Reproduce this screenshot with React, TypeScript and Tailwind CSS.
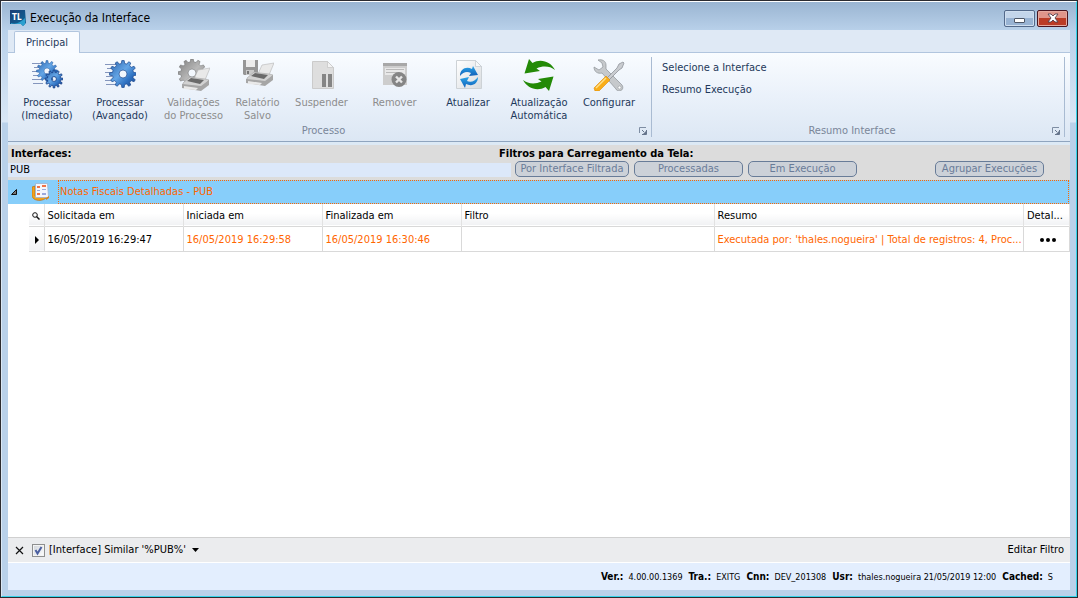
import { useState, type ReactNode } from 'react'

interface Execution {
  requested: string
  started: string
  finished: string
  filter: string
  summary: string
}

const executions: Execution[] = [
  {
    requested: '16/05/2019 16:29:47',
    started: '16/05/2019 16:29:58',
    finished: '16/05/2019 16:30:46',
    filter: '',
    summary: "Executada por: 'thales.nogueira' | Total de registros: 4, Proc...",
  },
]

const statusItems = [
  { label: 'Ver.:', value: '4.00.00.1369' },
  { label: 'Tra.:', value: 'EXITG' },
  { label: 'Cnn:', value: 'DEV_201308' },
  { label: 'Usr:', value: 'thales.nogueira 21/05/2019 12:00' },
  { label: 'Cached:', value: 'S' },
]

// Outline of a cog wheel with a hole in the middle
const gearPath = (cx: number, cy: number, outer: number, inner: number, hole: number, teeth: number) => {
  const step = (Math.PI * 2) / teeth
  const points: string[] = []
  for (let i = 0; i < teeth; i++) {
    const a = i * step
    const parts: [number, number][] = [
      [inner, a - step * 0.3],
      [outer, a - step * 0.17],
      [outer, a + step * 0.17],
      [inner, a + step * 0.3],
    ]
    parts.forEach(([r, t]) => points.push(`${(cx + r * Math.cos(t)).toFixed(2)} ${(cy + r * Math.sin(t)).toFixed(2)}`))
  }
  return `M${points.join('L')}ZM${cx - hole} ${cy}a${hole} ${hole} 0 1 0 ${hole * 2} 0a${hole} ${hole} 0 1 0 ${-hole * 2} 0Z`
}

function Gradients() {
  return (
    <svg className="absolute h-0 w-0" aria-hidden="true">
      <defs>
        <linearGradient id="blue" x1="0" y1="0" x2="1" y2="1">
          <stop offset="0" stopColor="#2a62ab" />
          <stop offset="0.45" stopColor="#64a6e6" />
          <stop offset="0.7" stopColor="#2f72c2" />
          <stop offset="1" stopColor="#163f86" />
        </linearGradient>
        <linearGradient id="gray" x1="0" y1="0" x2="1" y2="1">
          <stop offset="0" stopColor="#7d7d7d" />
          <stop offset="0.5" stopColor="#b8b8b8" />
          <stop offset="1" stopColor="#7c7c7c" />
        </linearGradient>
        <linearGradient id="paper" x1="0" y1="0" x2="1" y2="1">
          <stop offset="0" stopColor="#ffffff" />
          <stop offset="1" stopColor="#d9dcdf" />
        </linearGradient>
        <linearGradient id="arrow" x1="0" y1="0" x2="0" y2="1">
          <stop offset="0" stopColor="#2ba4e8" />
          <stop offset="1" stopColor="#1260b8" />
        </linearGradient>
        <linearGradient id="logo" x1="0" y1="0" x2="1" y2="1">
          <stop offset="0" stopColor="#1d3d74" />
          <stop offset="1" stopColor="#0d6b9d" />
        </linearGradient>
      </defs>
    </svg>
  )
}

function Icon({ children }: { children: ReactNode }) {
  return (
    <svg viewBox="0 0 32 32" className="h-8 w-8" aria-hidden="true">
      {children}
    </svg>
  )
}

function Printer() {
  return (
    <g>
      <path d="M16 20l4-9 12-2-5 12z" fill="#e9e9e9" stroke="#b5b5b5" strokeWidth="0.6" />
      <path d="M5 24l7-6 6 1 9 1 4 1-7 7-19-2z" fill="#d2d2d2" stroke="#a2a2a2" strokeWidth="0.6" />
      <path d="M9 22l4-3 13 2-4 4z" fill="#6a6a6a" />
      <path d="M4 25l19 2 8-6v5l-8 6-19-3z" fill="#a6a6a6" />
      <path d="M6 27l14 2-2 2-12-1z" fill="#e9e9e9" />
    </g>
  )
}

function ProcessNowIcon() {
  return (
    <Icon>
      <path d="M1 4.500h10M3 8.500h6M1 12.500h7M2 16.500h6M1 20.500h9M2 24.500h10" stroke="#8496bd" strokeWidth="1" />
      <path d={gearPath(16, 12, 10.5, 8, 3, 12)} fill="url(#blue)" stroke="#24599f" strokeWidth="0.5" fillRule="evenodd" />
      <path d={gearPath(23, 20, 9, 6.6, 2.4, 12)} fill="url(#blue)" stroke="#163f86" strokeWidth="0.8" fillRule="evenodd" />
    </Icon>
  )
}

function ProcessAdvancedIcon() {
  return (
    <Icon>
      <path d="M1 5.500h12M3 9.500h8M1 13.500h8M2 17.500h6M1 21.500h9M2 25.500h10" stroke="#8496bd" strokeWidth="1" />
      <path
        d={gearPath(19, 15, 13.5, 10.6, 4, 12)}
        fill="url(#blue)"
        stroke="#1c4b90"
        strokeWidth="0.7"
        fillRule="evenodd"
      />
    </Icon>
  )
}

function ValidationsIcon() {
  return (
    <Icon>
      <path d={gearPath(14, 14, 14, 11.2, 4, 12)} fill="url(#gray)" stroke="#747474" strokeWidth="0.6" fillRule="evenodd" />
      <Printer />
    </Icon>
  )
}

function SavedReportIcon() {
  return (
    <Icon>
      <path d="M1 1h15v15H2l-1-1z" fill="#969696" />
      <path d="M4 1h9v7H4z" fill="#ececec" />
      <path d="M4 11h8v5H4z" fill="#c9c9c9" />
      <path d="M5 12h2v3H5z" fill="#777" />
      <g transform="translate(0 -5)">
        <Printer />
      </g>
    </Icon>
  )
}

function SuspendIcon() {
  return (
    <Icon>
      <path d="M6.500 2.500h15l6 6v21h-21z" fill="#dedede" stroke="#cbcbcb" />
      <path d="M21.500 2.500v6h6z" fill="#f3f3f3" stroke="#c4c4c4" strokeWidth="0.7" />
      <path d="M16 15h4v13h-4zM22 15h4v13h-4z" fill="#858585" />
    </Icon>
  )
}

function RemoveIcon() {
  return (
    <Icon>
      <path d="M4 4h24v22H4z" fill="#cdcdcd" />
      <path d="M4 4h24v3H4z" fill="#a8a8a8" />
      <path d="M6 9h20v7H6z" fill="#e8e8e8" />
      <path d="M7 10.500h18M7 13.500h13" stroke="#b9b9b9" />
      <circle cx="20" cy="20.500" r="7.500" fill="#858585" />
      <path d="M17 17.500l6 6M23 17.500l-6 6" stroke="#e6e6e6" strokeWidth="2.400" />
    </Icon>
  )
}

function RefreshIcon() {
  return (
    <Icon>
      <path d="M4.500 1.500h19l6 6v22h-25z" fill="url(#paper)" stroke="#cdd2d6" />
      <path d="M23.500 1.500v6h6z" fill="#f7f9fa" stroke="#c3c9ce" strokeWidth="0.7" />
      <path d="M8 17C8 10 14 7 20 10l1-3 5 9-9 1 2-3c-4-2-8-1-11 3z" fill="url(#arrow)" />
      <path d="M26 18c0 7-6 10-12 7l-1 4-5-9 9-2-2 4c4 2 8 0 11-4z" fill="url(#arrow)" />
    </Icon>
  )
}

function AutoRefreshIcon() {
  return (
    <Icon>
      <path d="M6 0L1.500 14.500L17 12L13.500 9.500C20 6.500 27 7 32 11C28 3 18-1 9.500 4Z" fill="#238a07" />
      <path d="M26 32L30.500 17.500L15 20L18.500 22.500C12 25.500 5 25 0 21C4 29 14 33 22.500 28Z" fill="#238a07" />
    </Icon>
  )
}

function ConfigureIcon() {
  return (
    <Icon>
      <path
        d="M5 1c4-1 8 1 8 5v4l16 16c2 3 0 6-3 6-1 0-2 0-3-2L9 14c-4 1-8-1-8-6l5 3 4-3-1-4z"
        fill="#c6c9cc"
        stroke="#8d9297"
        strokeWidth="0.7"
      />
      <circle cx="26.500" cy="28.500" r="1.500" fill="#fff" stroke="#8d9297" strokeWidth="0.5" />
      <path d="M30 3l-4 2-2 4-10 10 2 2 10-10 3-2 2-5z" fill="#c9ccd0" stroke="#858a90" strokeWidth="0.7" />
      <path d="M13 17l4 4L6 32H2l-1-3z" fill="#f9ae19" stroke="#db8a08" strokeWidth="0.6" />
      <path d="M13 19L3 29" stroke="#ffe08a" strokeWidth="1.500" />
    </Icon>
  )
}

interface RibbonButtonProps {
  lines: string[]
  icon: ReactNode
  width: string
  disabled?: boolean
}

function RibbonButton({ lines, icon, width, disabled }: RibbonButtonProps) {
  return (
    <button
      type="button"
      disabled={disabled}
      className={`flex shrink-0 flex-col items-center whitespace-nowrap text-[#1e395b] disabled:text-[#8d8d8d] ${width}`}
    >
      {icon}
      <span className="mt-[5px] block leading-[13px]">
        {lines.map((line) => (
          <span key={line} className="block">
            {line}
          </span>
        ))}
      </span>
    </button>
  )
}

function GroupFooter({ title }: { title: string }) {
  return (
    <div className="mt-auto flex h-3 items-center text-[#7a8699]">
      <span className="flex-1 text-center">{title}</span>
      <button type="button" aria-label={`Opções de ${title}`} className="mr-1 h-2 w-2">
        <svg viewBox="0 0 8 8" className="h-2 w-2" aria-hidden="true">
          <path d="M0.500 6V0.500H7" fill="none" stroke="#7e8da3" />
          <path d="M3 3l2 2M7.500 3v4.500H3" fill="none" stroke="#66758c" />
          <path d="M4 7l3-3v3z" fill="#66758c" />
        </svg>
      </button>
    </div>
  )
}

function FilterButton({ children, className = '' }: { children: ReactNode; className?: string }) {
  return (
    <button
      type="button"
      className={`h-4 shrink-0 whitespace-nowrap rounded-[5px] border border-[#687c98] bg-[#ccd1d8] text-[11px] leading-3 text-[#6a7c98] ${className}`}
    >
      {children}
    </button>
  )
}

export default function App() {
  const [search, setSearch] = useState('PUB')
  const [filterOn, setFilterOn] = useState(true)

  return (
    <div className="flex min-h-screen flex-col border border-[#2b2b30] bg-[#b9d1ea] bg-[linear-gradient(to_bottom,#99b4d1_0,#b9d1ea_30px,#d9e7f6_121px,#b9d1ea_122px)] font-['DejaVu_Sans_Condensed','DejaVu_Sans',sans-serif] text-[11px] text-black">
      <Gradients />
      <div className="flex flex-1 flex-col border-t border-r border-b border-l border-t-white border-r-[#35d3ea] border-b-[#35d3ea] border-l-[#dbe8f5] px-[6px] pb-[6px]">
        <header className="flex h-7 items-center pt-1">
          <svg viewBox="0 0 16 16" className="ml-0.5 h-4 w-4" aria-hidden="true">
            <path d="M0 0h15l1 13-3 3-2-2H0z" fill="url(#logo)" />
            <path d="M1 13c5 2 10-1 14-5v6l-2 2-2-2H1z" fill="#2ba0d0" />
            <text x="2" y="10" fontSize="8" fontWeight="bold" fill="#fff">
              TL
            </text>
          </svg>
          <h1 className="ml-1 text-[12px]">Execução da Interface</h1>
          <div className="mr-0.5 ml-auto flex gap-0.5">
            <button
              type="button"
              aria-label="Minimizar"
              className="flex h-[17px] w-[31px] items-center justify-center rounded-xs border border-[#53698a] bg-linear-to-b from-[#c3d5ea] from-50% to-[#98b3d3] to-50% shadow-[inset_0_0_0_1px_#cfdeef]"
            >
              <span className="mt-1 h-[5px] w-[11px] rounded-[1px] border border-[#4d5666] bg-white" />
            </button>
            <button
              type="button"
              aria-label="Fechar"
              className="flex h-[17px] w-[31px] items-center justify-center rounded-xs border border-[#4a1520] bg-linear-to-b from-[#e0958a] from-50% to-[#bb3c26] to-50% shadow-[inset_0_0_0_1px_#e5aaa0]"
            >
              <svg viewBox="0 0 12 10" className="h-[10px] w-3" aria-hidden="true">
                <path d="M1 1h3l2 2 2-2h3L8 5l3 4H8L6 7 4 9H1l3-4z" fill="#fff" stroke="#53414e" strokeWidth="0.9" />
              </svg>
            </button>
          </div>
        </header>

        <nav className="flex h-[23px] items-end border-b border-[#b1c5de] bg-[#dfe9f5] pl-[6px]">
          <button
            type="button"
            className="-mb-px h-[22px] w-[66px] rounded-t-xs border border-b-0 border-[#b1c5de] bg-[#f8fbff] pt-0.5 text-[#1e395b]"
          >
            Principal
          </button>
        </nav>

        <section className="flex h-[89px] border-b border-[#8fa5bf] bg-linear-to-b from-[#f9fcff] via-[#eaf1fa] to-[#dce7f4] py-1">
          <div className="flex shrink-0 flex-col">
            <div className="flex items-start pt-0.5 pr-[6px] pl-[3px]">
              <RibbonButton lines={['Processar', '(Imediato)']} icon={<ProcessNowIcon />} width="w-[72px]" />
              <RibbonButton lines={['Processar', '(Avançado)']} icon={<ProcessAdvancedIcon />} width="w-[74px]" />
              <RibbonButton lines={['Validações', 'do Processo']} icon={<ValidationsIcon />} width="w-[73px]" disabled />
              <RibbonButton lines={['Relatório', 'Salvo']} icon={<SavedReportIcon />} width="w-[55px]" disabled />
              <RibbonButton lines={['Suspender']} icon={<SuspendIcon />} width="w-[73px]" disabled />
              <RibbonButton lines={['Remover']} icon={<RemoveIcon />} width="w-[73px]" disabled />
              <RibbonButton lines={['Atualizar']} icon={<RefreshIcon />} width="w-[74px]" />
              <RibbonButton lines={['Atualização', 'Automática']} icon={<AutoRefreshIcon />} width="w-[68px]" />
              <RibbonButton lines={['Configurar']} icon={<ConfigureIcon />} width="w-[72px]" />
            </div>
            <GroupFooter title="Processo" />
          </div>
          <div className="mr-[5px] flex flex-1 flex-col border-x border-[#a9bbd2]">
            <div className="flex flex-col items-start gap-[6px] pt-[3px] pl-[10px] text-[#1e395b]">
              <button type="button" className="h-4">
                Selecione a Interface
              </button>
              <button type="button" className="h-4">
                Resumo Execução
              </button>
            </div>
            <GroupFooter title="Resumo Interface" />
          </div>
        </section>

        <section className="flex h-[38px] items-start border-t-3 border-[#dce9f5] bg-[#dcdcdc]">
          <div className="w-[503px] shrink-0">
            <label htmlFor="interfaces" className="block h-[18px] pl-[3px] leading-[18px] font-bold">
              Interfaces:
            </label>
            <input
              id="interfaces"
              value={search}
              onChange={(e) => setSearch(e.target.value)}
              className="block h-[14px] w-full bg-[#dce8fa] pl-0.5 outline-none"
            />
          </div>
          <div className="min-w-0 flex-1">
            <h2 className="-ml-3 h-4 leading-[18px] font-bold">Filtros para Carregamento da Tela:</h2>
            <div className="flex gap-[5px] pr-[26px] pl-1">
              <FilterButton className="w-[114px]">Por Interface Filtrada</FilterButton>
              <FilterButton className="w-[109px]">Processadas</FilterButton>
              <FilterButton className="w-[109px]">Em Execução</FilterButton>
              <FilterButton className="ml-auto w-[109px]">Agrupar Execuções</FilterButton>
            </div>
          </div>
        </section>

        <main className="flex flex-1 flex-col bg-white">
          <div className="flex h-6 items-stretch bg-[#87cefa] pr-px">
            <button type="button" aria-label="Recolher" className="w-6 pl-[3px]">
              <svg viewBox="0 0 6 6" className="h-[6px] w-[6px]" aria-hidden="true">
                <path d="M0.500 5.500h5v-5z" fill="#777" stroke="#111" />
              </svg>
            </button>
            <svg viewBox="0 0 18 18" className="mr-2 h-[18px] w-[18px] self-center" aria-hidden="true">
              <path
                d="M0 4l3-1v10h11v2c-3 3-9 3-12 1-1-1-2-2-2-4z"
                fill="#f0a21c"
                stroke="#b8650c"
                strokeWidth="0.6"
              />
              <path d="M3.500 0.500h12l1 14h-13z" fill="#f4f7fc" stroke="#9bacc8" strokeWidth="0.7" />
              <path d="M5 3h3v2H5zM10 2h4v2h-4zM5 10h3v2H5z" fill="#ef7448" />
              <path d="M10 6h4v1h-4zM5 7h3v1H5zM10 10h4v2h-4z" fill="#9aa9dc" />
              <path d="M14 15l3-2v2l-3 2z" fill="#d9861a" />
            </svg>
            <div className="flex flex-1 items-center border border-dotted border-[#ff6600] pt-px pl-px text-[#ff6600]">
              Notas Fiscais Detalhadas - PUB
            </div>
          </div>

          <div className="pl-[21px]">
            <table className="w-full table-fixed border-collapse text-left">
              <colgroup>
                <col className="w-[15px]" />
                <col className="w-[139px]" />
                <col className="w-[139px]" />
                <col className="w-[139px]" />
                <col className="w-[253px]" />
                <col />
                <col className="w-[46px]" />
              </colgroup>
              <thead>
                <tr className="h-[22px] border-b border-[#d9d9d9] bg-linear-to-b from-white from-45% to-[#f1f2f4] [&>th]:border-r [&>th]:border-[#e2e2e2] [&>th]:pt-[3px] [&>th]:pr-0 [&>th]:pb-0 [&>th]:pl-[3px] [&>th]:font-normal">
                  <th>
                    <svg viewBox="0 0 8 8" className="h-2 w-2" role="img" aria-label="Localizar">
                      <circle cx="3" cy="3" r="2.300" fill="none" stroke="#111" />
                      <path d="M4.500 4.500L7.500 7.500" stroke="#111" strokeWidth="1.500" />
                    </svg>
                  </th>
                  <th>Solicitada em</th>
                  <th>Iniciada em</th>
                  <th>Finalizada em</th>
                  <th>Filtro</th>
                  <th>Resumo</th>
                  <th>Detal...</th>
                </tr>
              </thead>
              <tbody>
                {executions.map((row) => (
                  <tr
                    key={row.requested}
                    className="h-[25px] border-b border-[#d9d9d9] text-[#ff6600] [&>td]:border-r [&>td]:border-[#d9d9d9] [&>td]:pt-[3px] [&>td]:pr-0 [&>td]:pb-0 [&>td]:pl-[3px]"
                  >
                    <td className="bg-linear-to-b from-white to-[#f1f2f4]">
                      <svg viewBox="0 0 8 8" className="ml-0.5 h-2 w-2" aria-hidden="true">
                        <path d="M1 0l4 4-4 4z" fill="#000" />
                      </svg>
                    </td>
                    <td className="text-black">{row.requested}</td>
                    <td>{row.started}</td>
                    <td>{row.finished}</td>
                    <td>{row.filter}</td>
                    <td className="whitespace-nowrap">{row.summary}</td>
                    <td className="text-center">
                      <button type="button" aria-label="Detalhes" className="inline-flex gap-0.5 align-middle">
                        <span className="h-1 w-1 rounded-full bg-black" />
                        <span className="h-1 w-1 rounded-full bg-black" />
                        <span className="h-1 w-1 rounded-full bg-black" />
                      </button>
                    </td>
                  </tr>
                ))}
              </tbody>
            </table>
          </div>
        </main>

        <div className="flex h-[26px] items-center border-t border-b border-t-[#d0d0d0] border-b-white bg-[#ebecee] pr-[6px] pl-[7px]">
          <button type="button" aria-label="Limpar filtro" className="h-[9px] w-[9px]">
            <svg viewBox="0 0 9 9" className="h-[9px] w-[9px]" aria-hidden="true">
              <path d="M1 1l7 7M8 1L1 8" stroke="#111" strokeWidth="1.2" />
            </svg>
          </button>
          <label className="ml-2 flex items-center">
            <span className="grid h-[13px] w-[13px]">
              <input
                type="checkbox"
                checked={filterOn}
                onChange={(e) => setFilterOn(e.target.checked)}
                className="col-start-1 row-start-1 h-[13px] w-[13px] appearance-none border border-[#8e8f8f] bg-linear-to-br from-[#cfd3d9] to-white shadow-[inset_0_0_0_1px_#f4f4f4]"
              />
              {filterOn && (
                <svg viewBox="0 0 13 13" className="pointer-events-none col-start-1 row-start-1" aria-hidden="true">
                  <path d="M3.500 6L5.500 9.500L9.500 3" fill="none" stroke="#4b5fa0" strokeWidth="2" />
                </svg>
              )}
            </span>
            <span className="ml-1">[Interface] Similar '%PUB%'</span>
          </label>
          <button type="button" aria-label="Filtros recentes" className="ml-[6px]">
            <svg viewBox="0 0 7 4" className="h-1 w-[7px]" aria-hidden="true">
              <path d="M0 0h7L3.500 4z" fill="#000" />
            </svg>
          </button>
          <button type="button" className="ml-auto">
            Editar Filtro
          </button>
        </div>

        <footer className="flex h-[27px] items-center justify-end gap-[6px] bg-[#e3eefe] pr-[17px] text-[9px]">
          {statusItems.map((item) => (
            <span key={item.label} className="flex items-baseline gap-[5px]">
              <b className="text-[10px]">{item.label}</b>
              {item.value}
            </span>
          ))}
        </footer>
      </div>
    </div>
  )
}
